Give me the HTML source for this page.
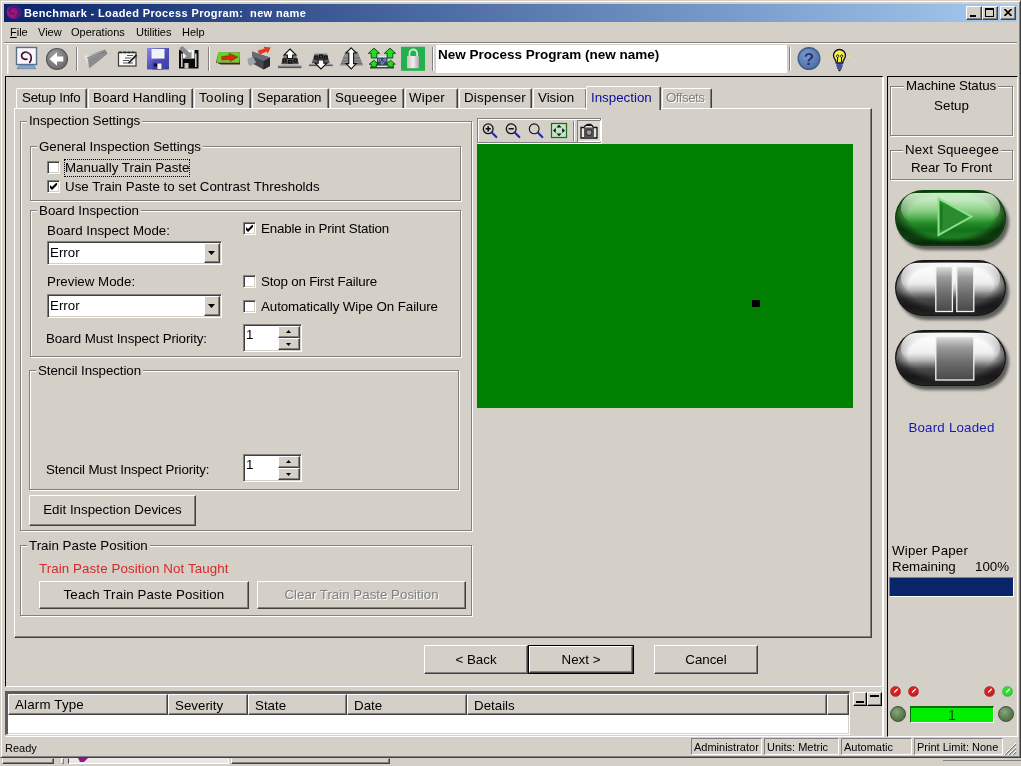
<!DOCTYPE html>
<html lang="en">
<head>
<meta charset="utf-8">
<title>Benchmark - Loaded Process Program: new name</title>
<style>
html,body{margin:0;padding:0;}
body{width:1021px;height:766px;overflow:hidden;background:#d4d0c8;position:relative;font-family:"Liberation Sans",sans-serif;font-size:14px;color:#000;}
#app{position:absolute;left:0;top:0;width:1021px;height:766px;overflow:hidden;background:#d4d0c8;will-change:transform;}
.a{position:absolute;white-space:nowrap;}
.t{position:absolute;white-space:nowrap;line-height:16px;font-size:13.33px;margin-top:1px;}
.th{position:absolute;white-space:nowrap;font-size:11px;line-height:13px;}
.grp{position:absolute;border:1px solid #808080;box-shadow:1px 1px 0 #fff, inset 1px 1px 0 #fff;box-sizing:border-box;}
.lg{position:absolute;white-space:nowrap;line-height:16px;font-size:13.33px;margin-top:1px;background:#d4d0c8;padding:0 2px;}
.btn{position:absolute;box-sizing:border-box;border:1px solid;border-color:#fff #404040 #404040 #fff;box-shadow:inset -1px -1px 0 #808080;text-align:center;font-size:13.33px;background:#d4d0c8;white-space:nowrap;}
.sunk{position:absolute;box-sizing:border-box;border:1px solid;border-color:#808080 #fff #fff #808080;box-shadow:inset 1px 1px 0 #404040, inset -1px -1px 0 #d4d0c8;background:#fff;}
.cb{position:absolute;width:13px;height:13px;box-sizing:border-box;border:1px solid;border-color:#808080 #fff #fff #808080;box-shadow:inset 1px 1px 0 #404040, inset -1px -1px 0 #d4d0c8;background:#fff;}
.cb svg{position:absolute;left:2px;top:2px;}
.sb{position:absolute;box-sizing:border-box;height:17px;border:1px solid;border-color:#808080 #fff #fff #808080;font-size:11px;line-height:16px;padding-left:2px;white-space:nowrap;}
.tab{position:absolute;box-sizing:border-box;border:1px solid;border-color:#fff #404040 transparent #fff;border-bottom:none;box-shadow:inset -1px 0 0 #808080;border-radius:2px 2px 0 0;background:#d4d0c8;}
.pill{position:absolute;left:896px;width:112px;height:56px;border-radius:28px;box-sizing:border-box;border:2px solid #000;box-shadow:1px 2px 2px rgba(0,0,0,0.35);overflow:hidden;}
.hd{position:absolute;top:694px;height:21px;box-sizing:border-box;background:#d4d0c8;border:1px solid;border-color:#fff #404040 #404040 #fff;box-shadow:inset -1px -1px 0 #808080;}
</style>
</head>
<body>
<div id="app">

<!-- window frame -->
<div class="a" style="left:0;top:0;width:1021px;height:758px;box-sizing:border-box;border:1px solid;border-color:#d4d0c8 #404040 #404040 #d4d0c8;box-shadow:inset 1px 1px 0 #fff, inset -1px -1px 0 #808080;"></div>

<!-- title bar -->
<div class="a" id="title" style="left:4px;top:4px;width:1013px;height:18px;background:linear-gradient(90deg,#0a246a 0%,#a6caf0 100%);"></div>
<svg class="a" style="left:5px;top:4px" width="18" height="17" viewBox="0 0 18 17"><defs><radialGradient id="ti" cx="0.35" cy="0.6" r="0.7"><stop offset="0" stop-color="#b01868"/><stop offset="0.6" stop-color="#7c1a8c"/><stop offset="1" stop-color="#5a1a90" stop-opacity="0.2"/></radialGradient></defs>
<ellipse cx="9.2" cy="8" rx="7.8" ry="7" fill="url(#ti)"/><path d="M9.5 9.5 C 7 10.5 4.5 9 4.5 6.6 C 4.5 4 7.5 2.6 10 3.4 C 13 4.4 14 7.5 13.2 10 C 12.8 11.5 12 12.5 10.5 13.5" fill="none" stroke="#4a1068" stroke-width="1.5" opacity="0.8"/></svg>
<span class="th" id="titletext" style="left:24px;top:6px;color:#fff;font-weight:bold;font-size:11px;line-height:14px;letter-spacing:0.36px;">Benchmark - Loaded Process Program:&nbsp; new name</span>

<!-- menu -->
<span class="th" style="left:10px;top:26px;"><u>F</u>ile</span>
<span class="th" style="left:38px;top:26px;">View</span>
<span class="th" style="left:71px;top:26px;">Operations</span>
<span class="th" style="left:136px;top:26px;">Utilities</span>
<span class="th" style="left:182px;top:26px;">Help</span>

<!-- title buttons -->
<div class="btn" style="left:966px;top:6px;width:16px;height:14px;"><div class="a" style="left:3px;top:8px;width:6px;height:2px;background:#000;"></div></div>
<div class="btn" style="left:982px;top:6px;width:16px;height:14px;"><div class="a" style="left:2px;top:1px;width:9px;height:9px;box-sizing:border-box;border:1px solid #000;border-top-width:2px;"></div></div>
<div class="btn" style="left:1000px;top:6px;width:16px;height:14px;"><svg class="a" style="left:3px;top:2px" width="8" height="7" viewBox="0 0 8 7"><path d="M0.5 0 L7.5 7 M7.5 0 L0.5 7" stroke="#000" stroke-width="1.6" fill="none"/></svg></div>

<!-- menu / toolbar separator -->
<div class="a" style="left:4px;top:42px;width:1013px;height:1px;background:#808080;"></div>
<div class="a" style="left:4px;top:43px;width:1013px;height:1px;background:#fff;"></div>
<!-- toolbar gripper -->
<div class="a" style="left:7px;top:45px;width:1px;height:29px;background:#fff;"></div><div class="a" style="left:8px;top:45px;width:1px;height:29px;background:#e6e3dd;"></div>
<!-- toolbar separators -->
<div class="a" style="left:76px;top:47px;width:1px;height:24px;background:#808080;box-shadow:1px 0 0 #fff;"></div>
<div class="a" style="left:208px;top:47px;width:1px;height:24px;background:#808080;box-shadow:1px 0 0 #fff;"></div>
<div class="a" style="left:432px;top:47px;width:1px;height:24px;background:#808080;box-shadow:1px 0 0 #fff;"></div>
<div class="a" style="left:789px;top:47px;width:1px;height:24px;background:#808080;box-shadow:1px 0 0 #fff;"></div>
<!-- program name field -->
<div class="a" style="left:436px;top:45px;width:351px;height:28px;background:#fff;"></div>
<span class="a" style="left:438px;top:47px;font-size:13.5px;line-height:16px;font-weight:bold;">New Process Program (new name)</span>

<!-- TOOLBAR ICONS -->
<svg class="a" style="left:0;top:44px" width="880" height="30" viewBox="0 44 880 30">
<defs>
<linearGradient id="tg1" x1="0" y1="0" x2="0" y2="1"><stop offset="0" stop-color="#8a8a8a"/><stop offset="1" stop-color="#4a4a4a"/></linearGradient>
<linearGradient id="tg2" x1="0" y1="0" x2="0" y2="1"><stop offset="0" stop-color="#d8d8d8"/><stop offset="1" stop-color="#3a3a3a"/></linearGradient>
<linearGradient id="fl1" x1="0" y1="0" x2="1" y2="1"><stop offset="0" stop-color="#8a8af0"/><stop offset="0.5" stop-color="#5050b8"/><stop offset="1" stop-color="#3c3ca0"/></linearGradient>
<linearGradient id="fo1" x1="0" y1="0" x2="1" y2="0"><stop offset="0" stop-color="#f0f0f0"/><stop offset="0.35" stop-color="#b8b8b8"/><stop offset="1" stop-color="#808080"/></linearGradient>
<radialGradient id="bk1" cx="0.4" cy="0.35" r="0.7"><stop offset="0" stop-color="#a0a0a0"/><stop offset="1" stop-color="#666"/></radialGradient>
<radialGradient id="hp1" cx="0.4" cy="0.35" r="0.7"><stop offset="0" stop-color="#7a9ad0"/><stop offset="1" stop-color="#4a6aa8"/></radialGradient>
<linearGradient id="lk1" x1="0" y1="0" x2="1" y2="0"><stop offset="0" stop-color="#c8c0c4"/><stop offset="0.5" stop-color="#f4eef0"/><stop offset="1" stop-color="#b0a8ac"/></linearGradient>
</defs>
<!-- 1 monitor -->
<rect x="16.5" y="47.5" width="20" height="17" fill="#fbf6fa" stroke="#56708e" stroke-width="1.4"/>
<path d="M19 65.5 h15 l2 3.2 h-19 z" fill="#86a6cc" stroke="#5a7aa0" stroke-width="0.6"/>
<path d="M26.9 59.2 C 24.5 60 22 58.5 21.6 56.1 C 21.2 53.5 24 51.8 26.9 52.3 C 30 52.8 31.6 56 31.2 58.6 C 31 60.3 30.5 61.5 29.7 62.3" fill="none" stroke="#3a1030" stroke-width="1.7" stroke-linecap="round"/>
<path d="M24 53.5 q3 -2 6 0.5" fill="none" stroke="#f0c0d8" stroke-width="0.8" opacity="0.6"/>
<!-- 2 back -->
<circle cx="57" cy="59" r="10.5" fill="url(#bk1)" stroke="#585858" stroke-width="1.2"/>
<path d="M49.5 59 L57 52.3 L57 56.6 L63.3 56.6 L63.3 61.4 L57 61.4 L57 65.7 Z" fill="#fff"/>
<!-- 3 folder (disabled) -->
<path d="M84.5 56 L105 49.5 L107.5 53.5 L89 69 Z" fill="url(#fo1)"/>
<path d="M88 58.5 L105.5 52.5 L106.5 54.5 L89 68.5 Z" fill="#8c8c8c"/>
<path d="M87 58 L105.5 51.5" stroke="#7a7a7a" stroke-width="1"/>
<!-- 4 notepad -->
<rect x="118.5" y="52.5" width="17.5" height="13.5" fill="#fafafa" stroke="#3a3a3a" stroke-width="1.2"/>
<path d="M119 52.3 h17" stroke="#2a2a2a" stroke-width="1.8" stroke-dasharray="3 1.2"/>
<path d="M127 55.5 h6 M125 58 h6 M123 60.5 h6 M123 63 h10" stroke="#555" stroke-width="1"/>
<path d="M136.5 55 L128.5 63.2" stroke="#222" stroke-width="1.8"/>
<!-- 5 blue floppy -->
<rect x="147" y="48" width="22" height="21.5" fill="url(#fl1)"/>
<rect x="151.5" y="49" width="13" height="9.6" fill="#f2f4fc"/>
<rect x="152.5" y="62.5" width="10.5" height="7" fill="#4040a0"/>
<rect x="157.5" y="63.5" width="4" height="5.5" fill="#f4f4ff"/>
<rect x="154" y="63.5" width="3" height="3" fill="#101020"/>
<!-- 6 black floppy w/ arrow -->
<rect x="179" y="50" width="19.5" height="18.5" fill="#0a0a0a"/>
<rect x="183" y="50" width="11.5" height="9" fill="#f4f4f4"/>
<rect x="181" y="53.5" width="1.6" height="13.5" fill="#c8c8c8"/><rect x="195" y="53.5" width="1.6" height="13.5" fill="#c8c8c8"/>
<rect x="184.5" y="63" width="4" height="5.5" fill="#c8c8c8"/>
<rect x="183" y="58.5" width="11.5" height="1.6" fill="#0a0a0a"/>
<path d="M180 47.5 L182.5 46 L190 53 L191.5 51 L191.5 58 L184.5 58 L186.5 56 L179.5 49.5 Z" fill="#8a8a8a"/>
<!-- 7 green board -->
<path d="M218.5 52.5 L240 52.5 L240 64.5 L221 64.5 L216 62.5 Z" fill="#3a2a1a"/>
<path d="M218.5 52 L240 52.5 L239.5 62 L216.5 62 Z" fill="#6ad02a"/>
<path d="M221.5 56.6 L229.5 55.6 L229 53.2 L238 57 L230 61.6 L230.3 59.4 L222 60 Z" fill="#d42c0c" stroke="#7a3a10" stroke-width="0.6"/><path d="M217 62.6 L239.5 62.6" stroke="#c8e870" stroke-width="0.8" opacity="0.7"/>
<!-- 8 camera -->
<path d="M252 51.5 L270 57.5 L270 66 L263.5 69.5 L252.5 63.5 Z" fill="#46464e"/>
<path d="M263.5 61 L270 57.5 L270 66 L263.5 69.5 Z" fill="#28282e"/>
<path d="M252 51.5 L263 55.5 L270 57.5 L263.5 61 L252.5 56.5 Z" fill="#6a6a74"/>
<path d="M247.5 58.5 L253 56.5 L256 62.5 L250.5 66 L248 64 Z" fill="#9aa2aa"/>
<path d="M257.5 50.8 L264.5 48.6 L263.8 46.8 L270.8 47.4 L267.6 53.4 L266.6 51.6 L259.8 54.4 Z" fill="#e03c1c"/><path d="M258 50.2 L264 48.4" stroke="#f8a090" stroke-width="0.8"/>
<!-- 9 tooling up -->
<path d="M284 54.5 L296 54.5 L299 64.5 L281 64.5 Z" fill="url(#tg1)"/>
<rect x="278" y="64.5" width="23.5" height="3.6" fill="url(#tg2)"/>
<path d="M290 49 L296 55 L292.6 55 L292.6 58.5 L287.4 58.5 L287.4 55 L284 55 Z" fill="#fff" stroke="#111" stroke-width="1.1" stroke-linejoin="miter"/>
<rect x="283" y="59" width="3" height="3" fill="#4a4a4a" stroke="#0a0a0a" stroke-width="1.2"/><rect x="288.5" y="60.3" width="3.4" height="2.6" fill="#4a4a4a" stroke="#0a0a0a" stroke-width="1.2"/><rect x="294" y="59" width="3" height="3" fill="#4a4a4a" stroke="#0a0a0a" stroke-width="1.2"/>
<!-- 10 tooling down -->
<path d="M314.5 53.5 L327 53.5 L330 64 L311.5 64 Z" fill="url(#tg1)"/>
<rect x="309" y="63.3" width="23.7" height="2.8" fill="url(#tg2)"/>
<path d="M321 69 L315.2 63.2 L318.2 63.2 L318.2 60 L323.8 60 L323.8 63.2 L326.8 63.2 Z" fill="#fff" stroke="#111" stroke-width="1.1"/>
<rect x="314.8" y="56" width="3" height="3" fill="#4a4a4a" stroke="#0a0a0a" stroke-width="1.2"/><rect x="319.5" y="55" width="3.2" height="3" fill="#4a4a4a" stroke="#0a0a0a" stroke-width="1.2"/><rect x="324.2" y="56" width="3" height="3" fill="#4a4a4a" stroke="#0a0a0a" stroke-width="1.2"/>
<!-- 11 double arrow -->
<path d="M345.5 51.5 L357.5 51.5 L363.3 65.5 L339.8 65.5 Z" fill="#8e8e8e"/>
<path d="M343 58 h17 M342 61 h19 M341 63.6 h21" stroke="#6e6e6e" stroke-width="1"/>
<path d="M351.2 47.8 L356.3 53 L353.6 53 L353.6 63.6 L356.3 63.6 L351.2 68.9 L346.1 63.6 L348.8 63.6 L348.8 53 L346.1 53 Z" fill="#fff" stroke="#111" stroke-width="1.1"/>
<!-- 12 green arrows -->
<rect x="377" y="56.5" width="10.5" height="9.5" fill="#34466a"/>
<rect x="377" y="56" width="10.5" height="1.5" fill="#dfe6f0"/>
<circle cx="379.5" cy="60" r="1.2" fill="none" stroke="#9ab0d0" stroke-width="0.8"/><circle cx="384.8" cy="60" r="1.2" fill="none" stroke="#9ab0d0" stroke-width="0.8"/><circle cx="382.2" cy="63" r="1.2" fill="none" stroke="#9ab0d0" stroke-width="0.8"/>
<path d="M370 67.8 h24" stroke="#203020" stroke-width="1.3"/><path d="M372 66.3 h20" stroke="#e8e8f0" stroke-width="1.2"/>
<g fill="#22dc22" stroke="#0c500c" stroke-width="1">
<path d="M374 48.2 L379.6 53.3 L376.8 53.3 L376.8 58 L371.2 58 L371.2 53.3 L368.4 53.3 Z"/>
<path d="M390 48.2 L395.6 53.3 L392.8 53.3 L392.8 58 L387.2 58 L387.2 53.3 L384.4 53.3 Z"/>
<path d="M373.8 60.3 L378.4 64.2 L376.4 64.2 L376.4 67 L371.2 67 L371.2 64.2 L369.2 64.2 Z"/>
<path d="M390.6 60.3 L395.2 64.2 L393.2 64.2 L393.2 67 L388 67 L388 64.2 L386 64.2 Z"/>
</g>
<!-- 13 lock -->
<rect x="401" y="46.8" width="24" height="24" fill="#22b14c"/>
<path d="M409.5 56.5 v-3.2 a3.8 3.8 0 0 1 7.6 0 v3.2" fill="none" stroke="#c8ecd0" stroke-width="1.8"/>
<rect x="407" y="56" width="12" height="12.3" rx="1" fill="url(#lk1)"/>
<!-- help -->
<circle cx="809" cy="58.5" r="10.8" fill="url(#hp1)" stroke="#3f5c8c" stroke-width="1.4"/>
<text x="809" y="65" text-anchor="middle" font-family="Liberation Sans, sans-serif" font-weight="bold" font-size="17" fill="#243a66">?</text>
<!-- bulb -->
<path d="M839.5 49.5 a6 6 0 0 1 6 6 c0 3 -2.6 4.2 -2.8 7.5 h-6.4 c-0.2 -3.3 -2.8 -4.5 -2.8 -7.5 a6 6 0 0 1 6 -6 z" fill="#f4f43a" stroke="#101030" stroke-width="1.3"/>
<path d="M837.5 57 v5 M841.5 57 v5 M837.2 57.2 a1.2 1.2 0 1 1 1 0 M841.2 57.2 a1.2 1.2 0 1 1 1 0" stroke="#101030" stroke-width="1" fill="none"/>
<path d="M836.4 64 h6.2 M836.4 66 h6.2 M837 68 h5" stroke="#1a2a8a" stroke-width="1.5"/>
<path d="M838 69.8 h3 l-1.5 1.2 z" fill="#111" stroke="#111" stroke-width="0.6"/>
<path d="M831.5 52 l-2 -1.2 M830.8 56.5 h-2.2 M847.5 52 l2 -1.2 M848.2 56.5 h2.2" stroke="#f0e860" stroke-width="1"/>
</svg>


<!-- main panel frame -->
<div class="a" id="mainpanel" style="left:5px;top:76px;width:879px;height:611px;box-sizing:border-box;border:1px solid;border-color:#000 #fff #fff #000;border-right-width:2px;"></div>
<div class="a" style="left:5px;top:687px;width:879px;height:50px;box-sizing:border-box;border:1px solid;border-color:transparent #fff #fff transparent;border-right-width:2px;"></div>

<!-- right panel frame -->
<div class="a" id="rightpanel" style="left:887px;top:76px;width:131px;height:661px;box-sizing:border-box;border:1px solid;border-color:#000 #fff #fff #000;"></div>

<!-- tab control -->
<div class="a" id="tabpanel" style="left:14px;top:108px;width:858px;height:530px;box-sizing:border-box;border:1px solid;border-color:#fff #404040 #404040 #fff;box-shadow:inset -1px -1px 0 #808080;"></div>
<div class="tab" style="left:16px;top:88px;width:71px;height:20px;"></div><span class="t" style="left:22px;top:89px;letter-spacing:-0.23px;">Setup Info</span>
<div class="tab" style="left:88px;top:88px;width:105px;height:20px;"></div><span class="t" style="left:93px;top:89px;letter-spacing:0.1px;">Board Handling</span>
<div class="tab" style="left:194px;top:88px;width:57px;height:20px;"></div><span class="t" style="left:199px;top:89px;letter-spacing:0.43px;">Tooling</span>
<div class="tab" style="left:252px;top:88px;width:77px;height:20px;"></div><span class="t" style="left:257px;top:89px;">Separation</span>
<div class="tab" style="left:330px;top:88px;width:74px;height:20px;"></div><span class="t" style="left:335px;top:89px;letter-spacing:0.15px;">Squeegee</span>
<div class="tab" style="left:405px;top:88px;width:53px;height:20px;"></div><span class="t" style="left:409px;top:89px;letter-spacing:0.24px;">Wiper</span>
<div class="tab" style="left:459px;top:88px;width:73px;height:20px;"></div><span class="t" style="left:464px;top:89px;letter-spacing:0.22px;">Dispenser</span>
<div class="tab" style="left:533px;top:88px;width:54px;height:20px;"></div><span class="t" style="left:538px;top:89px;">Vision</span>
<div class="tab" style="left:662px;top:88px;width:50px;height:20px;"></div><span class="t" style="left:666px;top:89px;color:#808080;text-shadow:1px 1px 0 #fff;letter-spacing:-0.5px;">Offsets</span>
<div class="tab" style="left:586px;top:86px;width:75px;height:24px;background:#d4d0c8;"></div><span class="t" style="left:591px;top:89px;color:#0a0aa0;">Inspection</span>

<!-- left content -->
<div class="grp" style="left:20px;top:121px;width:452px;height:410px;"></div><span class="lg" style="left:27px;top:112px;letter-spacing:-0.08px;">Inspection Settings</span>
<div class="grp" style="left:30px;top:146px;width:431px;height:55px;"></div><span class="lg" style="left:37px;top:138px;letter-spacing:-0.07px;">General Inspection Settings</span>
<div class="cb" style="left:47px;top:161px;"></div>
<span class="t" style="left:65px;top:159px;outline:1px dotted #000;outline-offset:0px;">Manually Train Paste</span>
<div class="cb" style="left:47px;top:180px;"><svg width="7" height="7" viewBox="0 0 7 7"><path d="M0 2v3l2 2 5-5V-1L2 4z" fill="#000"/></svg></div>
<span class="t" style="left:65px;top:178px;">Use Train Paste to set Contrast Thresholds</span>
<div class="grp" style="left:30px;top:210px;width:431px;height:147px;"></div><span class="lg" style="left:37px;top:202px;">Board Inspection</span>
<span class="t" style="left:47px;top:222px;">Board Inspect Mode:</span>
<div class="sunk" style="left:47px;top:241px;width:175px;height:24px;"></div><span class="t" style="left:50px;top:244px;">Error</span><div class="btn" style="left:204px;top:243px;width:16px;height:20px;"><svg class="a" style="left:3px;top:7px" width="7" height="4" viewBox="0 0 7 4"><path d="M0 0h7L3.5 4z" fill="#000"/></svg></div>
<span class="t" style="left:47px;top:273px;">Preview Mode:</span>
<div class="sunk" style="left:47px;top:294px;width:175px;height:24px;"></div><span class="t" style="left:50px;top:297px;">Error</span><div class="btn" style="left:204px;top:296px;width:16px;height:20px;"><svg class="a" style="left:3px;top:7px" width="7" height="4" viewBox="0 0 7 4"><path d="M0 0h7L3.5 4z" fill="#000"/></svg></div>
<span class="t" style="left:46px;top:330px;letter-spacing:-0.1px;">Board Must Inspect Priority:</span>
<div class="sunk" style="left:243px;top:324px;width:59px;height:28px;"></div><span class="t" style="left:246px;top:326px;">1</span><div class="btn" style="left:278px;top:326px;width:22px;height:12px;"><svg class="a" style="left:7px;top:3px" width="5" height="3" viewBox="0 0 5 3"><path d="M0 3h5L2.5 0z" fill="#000"/></svg></div><div class="btn" style="left:278px;top:338px;width:22px;height:12px;"><svg class="a" style="left:7px;top:4px" width="5" height="3" viewBox="0 0 5 3"><path d="M0 0h5L2.5 3z" fill="#000"/></svg></div>
<div class="cb" style="left:243px;top:222px;"><svg width="7" height="7" viewBox="0 0 7 7"><path d="M0 2v3l2 2 5-5V-1L2 4z" fill="#000"/></svg></div>
<span class="t" style="left:261px;top:220px;letter-spacing:-0.17px;">Enable in Print Station</span>
<div class="cb" style="left:243px;top:275px;"></div>
<span class="t" style="left:261px;top:273px;letter-spacing:-0.19px;">Stop on First Failure</span>
<div class="cb" style="left:243px;top:300px;"></div>
<span class="t" style="left:261px;top:298px;letter-spacing:-0.08px;">Automatically Wipe On Failure</span>
<div class="grp" style="left:29px;top:370px;width:430px;height:120px;"></div><span class="lg" style="left:36px;top:362px;letter-spacing:-0.08px;">Stencil Inspection</span>
<span class="t" style="left:46px;top:461px;letter-spacing:-0.16px;">Stencil Must Inspect Priority:</span>
<div class="sunk" style="left:243px;top:454px;width:59px;height:28px;"></div><span class="t" style="left:246px;top:456px;">1</span><div class="btn" style="left:278px;top:456px;width:22px;height:12px;"><svg class="a" style="left:7px;top:3px" width="5" height="3" viewBox="0 0 5 3"><path d="M0 3h5L2.5 0z" fill="#000"/></svg></div><div class="btn" style="left:278px;top:468px;width:22px;height:12px;"><svg class="a" style="left:7px;top:4px" width="5" height="3" viewBox="0 0 5 3"><path d="M0 0h5L2.5 3z" fill="#000"/></svg></div>
<div class="btn" style="left:29px;top:495px;width:167px;height:31px;line-height:28px;">Edit Inspection Devices</div>
<div class="grp" style="left:20px;top:545px;width:452px;height:71px;"></div><span class="lg" style="left:27px;top:537px;">Train Paste Position</span>
<span class="t" style="left:39px;top:560px;color:#d82828;letter-spacing:0.09px;">Train Paste Position Not Taught</span>
<div class="btn" style="left:39px;top:581px;width:210px;height:28px;line-height:25px;letter-spacing:0.115px;">Teach Train Paste Position</div>
<div class="btn" style="left:257px;top:581px;width:209px;height:28px;line-height:25px;color:#808080;text-shadow:1px 1px 0 #fff;">Clear Train Paste Position</div>

<!-- image viewer -->
<div class="a" style="left:477px;top:118px;width:124px;height:25px;box-sizing:border-box;border:1px solid #808080;box-shadow:1px 1px 0 #fff, inset 1px 1px 0 #fff;"></div>
<svg class="a" style="left:477px;top:119px" width="126" height="25" viewBox="477 119 126 25">
<g fill="none" stroke="#111" stroke-width="1.3">
<circle cx="488.2" cy="128.8" r="4.9"/><circle cx="511.2" cy="128.8" r="4.9"/><circle cx="534.2" cy="128.8" r="4.9" stroke-width="1.1"/>
</g>
<path d="M485.6 128.8 h5.2 M488.2 126.2 v5.2 M508.6 128.8 h5.2" stroke="#111" stroke-width="1.6"/>
<g stroke="#2828b0" stroke-width="2.2" stroke-linecap="round"><path d="M492.3 133 L496.3 137"/><path d="M515.3 133 L519.3 137"/><path d="M538.3 133 L542.3 137"/></g>
<rect x="551.5" y="123.5" width="15" height="14" fill="#c4e4c4" stroke="#1a6a1a" stroke-width="1.2"/>
<path d="M559 124.8 l2.6 2.8 h-5.2 z M559 136.2 l2.6 -2.8 h-5.2 z M553 130.5 l2.8 -2.6 v5.2 z M565 130.5 l-2.8 -2.6 v5.2 z" fill="#111"/>
<path d="M573.5 121 v20" stroke="#808080" stroke-width="1"/><path d="M574.5 121 v20" stroke="#fff" stroke-width="1"/>
<rect x="577.5" y="120.5" width="23" height="21" fill="#dcd9d2" stroke="#808080" stroke-width="1"/>
<path d="M578 141.5 h22.5 v-21" fill="none" stroke="#fff" stroke-width="1"/>
<path d="M581 127.5 h3 l1.5 -2.2 h6.5 l1.5 2.2 h3.5 v10.5 h-16 z" fill="#e8e8e8" stroke="#111" stroke-width="1.3"/>
<rect x="584" y="127.5" width="10" height="10" fill="#555"/>
<circle cx="589" cy="132.5" r="3" fill="#999" stroke="#222" stroke-width="1"/>
<rect x="586.5" y="123.8" width="5" height="2" fill="#111"/>
</svg>

<div class="a" style="left:477px;top:144px;width:376px;height:264px;background:#008000;"></div>
<div class="a" style="left:752px;top:300px;width:8px;height:7px;background:#000;"></div>

<!-- nav buttons -->
<div class="btn" style="left:424px;top:645px;width:104px;height:29px;line-height:28px;">&lt; Back</div>
<div class="a" style="left:528px;top:645px;width:106px;height:29px;box-sizing:border-box;border:1px solid #000;"></div><div class="btn" style="left:529px;top:646px;width:104px;height:27px;line-height:26px;">Next &gt;</div>
<div class="btn" style="left:654px;top:645px;width:104px;height:29px;line-height:28px;">Cancel</div>

<!-- right panel content -->
<div class="grp" style="left:890px;top:86px;width:123px;height:50px;"></div><span class="lg" style="left:904px;top:77px;letter-spacing:-0.13px;">Machine Status</span>
<span class="t" style="left:890px;top:97px;width:123px;text-align:center;">Setup</span>
<div class="grp" style="left:890px;top:150px;width:123px;height:30px;"></div><span class="lg" style="left:903px;top:141px;letter-spacing:0.16px;">Next Squeegee</span>
<span class="t" style="left:890px;top:159px;width:123px;text-align:center;">Rear To Front</span>
<svg class="a" style="left:892px;top:187px" width="122" height="66" viewBox="0 0 122 66">
<defs><linearGradient id="gp" x1="0" y1="0" x2="0" y2="1"><stop offset="0" stop-color="#1f7d20"/><stop offset="0.12" stop-color="#84d080"/><stop offset="0.36" stop-color="#58b656"/><stop offset="0.54" stop-color="#2c972e"/><stop offset="0.72" stop-color="#14711a"/><stop offset="0.88" stop-color="#1f8524"/><stop offset="1" stop-color="#0a520e"/></linearGradient>
<linearGradient id="hp" x1="0" y1="0" x2="0" y2="1"><stop offset="0" stop-color="#d8f4d4" stop-opacity="0.95"/><stop offset="1" stop-color="#d8f4d4" stop-opacity="0"/></linearGradient>
<radialGradient id="ep" cx="0.5" cy="0.45" r="0.5" gradientTransform="translate(0.5 0.45) scale(1 1.05) translate(-0.5 -0.45)"><stop offset="0.78" stop-color="#000" stop-opacity="0"/><stop offset="1" stop-color="#000" stop-opacity="0.55"/></radialGradient>
<filter id="bp" x="-10%" y="-10%" width="130%" height="140%"><feGaussianBlur stdDeviation="1.6"/></filter></defs>
<rect x="6" y="7" width="111" height="56" rx="28" fill="#000" opacity="0.55" filter="url(#bp)"/>
<rect x="3" y="3" width="111" height="56" rx="28" fill="#063f08"/>
<rect x="4.5" y="5" width="108" height="52.5" rx="26.2" fill="url(#gp)"/>
<rect x="4.5" y="5" width="108" height="52.5" rx="26.2" fill="url(#ep)"/>
<rect x="9" y="6" width="99" height="30" rx="15" fill="url(#hp)"/>
<path d="M46.5 11.5 L46.5 48 L79.5 29.5 Z" fill="#2a8c2e" stroke="#8ee08c" stroke-width="2" stroke-linejoin="miter"/><path d="M49.3 17 L49.3 42.5" stroke="#16781b" stroke-width="2.2"/>
</svg>
<svg class="a" style="left:892px;top:257px" width="122" height="66" viewBox="0 0 122 66">
<defs><linearGradient id="gq" x1="0" y1="0" x2="0" y2="1"><stop offset="0" stop-color="#8c8c8c"/><stop offset="0.12" stop-color="#f2f2f2"/><stop offset="0.4" stop-color="#e6e6e6"/><stop offset="0.55" stop-color="#a8a8a8"/><stop offset="0.7" stop-color="#4c4c4c"/><stop offset="0.85" stop-color="#343434"/><stop offset="1" stop-color="#4a4a4a"/></linearGradient>
<linearGradient id="hq" x1="0" y1="0" x2="0" y2="1"><stop offset="0" stop-color="#ffffff" stop-opacity="0.95"/><stop offset="1" stop-color="#ffffff" stop-opacity="0"/></linearGradient>
<radialGradient id="eq" cx="0.5" cy="0.45" r="0.5" gradientTransform="translate(0.5 0.45) scale(1 1.05) translate(-0.5 -0.45)"><stop offset="0.78" stop-color="#000" stop-opacity="0"/><stop offset="1" stop-color="#000" stop-opacity="0.55"/></radialGradient>
<filter id="bq" x="-10%" y="-10%" width="130%" height="140%"><feGaussianBlur stdDeviation="1.6"/></filter></defs>
<rect x="6" y="7" width="111" height="56" rx="28" fill="#000" opacity="0.55" filter="url(#bq)"/>
<rect x="3" y="3" width="111" height="56" rx="28" fill="#161616"/>
<rect x="4.5" y="5" width="108" height="52.5" rx="26.2" fill="url(#gq)"/>
<rect x="4.5" y="5" width="108" height="52.5" rx="26.2" fill="url(#eq)"/>
<rect x="9" y="6" width="99" height="30" rx="15" fill="url(#hq)"/>
<defs><linearGradient id="barg" x1="0" y1="0" x2="0" y2="1"><stop offset="0" stop-color="#e0e0e0"/><stop offset="0.25" stop-color="#9a9a9a"/><stop offset="0.6" stop-color="#6c6c6c"/><stop offset="1" stop-color="#484848"/></linearGradient></defs><rect x="43.8" y="9.5" width="16.6" height="45" fill="url(#barg)" stroke="#f4f4f4" stroke-width="1.3"/><rect x="64.8" y="9.5" width="17" height="45" fill="url(#barg)" stroke="#f4f4f4" stroke-width="1.3"/>
</svg>
<svg class="a" style="left:892px;top:327px" width="122" height="66" viewBox="0 0 122 66">
<defs><linearGradient id="gr" x1="0" y1="0" x2="0" y2="1"><stop offset="0" stop-color="#8c8c8c"/><stop offset="0.12" stop-color="#f2f2f2"/><stop offset="0.4" stop-color="#e6e6e6"/><stop offset="0.55" stop-color="#a8a8a8"/><stop offset="0.7" stop-color="#4c4c4c"/><stop offset="0.85" stop-color="#343434"/><stop offset="1" stop-color="#4a4a4a"/></linearGradient>
<linearGradient id="hr" x1="0" y1="0" x2="0" y2="1"><stop offset="0" stop-color="#ffffff" stop-opacity="0.95"/><stop offset="1" stop-color="#ffffff" stop-opacity="0"/></linearGradient>
<radialGradient id="er" cx="0.5" cy="0.45" r="0.5" gradientTransform="translate(0.5 0.45) scale(1 1.05) translate(-0.5 -0.45)"><stop offset="0.78" stop-color="#000" stop-opacity="0"/><stop offset="1" stop-color="#000" stop-opacity="0.55"/></radialGradient>
<filter id="br" x="-10%" y="-10%" width="130%" height="140%"><feGaussianBlur stdDeviation="1.6"/></filter></defs>
<rect x="6" y="7" width="111" height="56" rx="28" fill="#000" opacity="0.55" filter="url(#br)"/>
<rect x="3" y="3" width="111" height="56" rx="28" fill="#161616"/>
<rect x="4.5" y="5" width="108" height="52.5" rx="26.2" fill="url(#gr)"/>
<rect x="4.5" y="5" width="108" height="52.5" rx="26.2" fill="url(#er)"/>
<rect x="9" y="6" width="99" height="30" rx="15" fill="url(#hr)"/>
<rect x="43.8" y="9.5" width="38" height="43.5" fill="url(#barg)" stroke="#f4f4f4" stroke-width="1.3"/>
</svg>
<span class="t" style="left:890px;top:419px;width:123px;text-align:center;color:#1818b0;letter-spacing:0.2px;">Board Loaded</span>
<span class="t" style="left:892px;top:542px;letter-spacing:0.18px;">Wiper Paper</span>
<span class="t" style="left:892px;top:558px;">Remaining</span><span class="t" style="left:975px;top:558px;">100%</span>
<div class="a" style="left:889px;top:577px;width:125px;height:20px;box-sizing:border-box;border:1px solid;border-color:#808080 #fff #fff #808080;background:#0a246a;"></div>
<div class="a" style="left:890px;top:686px;width:11px;height:11px;border-radius:50%;box-sizing:border-box;border:1px solid #b04040;background:radial-gradient(circle at 45% 40%,#dc2020 0%,#dc2020 45%,#a01010 100%);"><svg class="a" style="left:1px;top:1px" width="8" height="7" viewBox="0 0 8 7"><path d="M5.4 1.2 L2.6 4" stroke="#fff" stroke-width="1.3" stroke-linecap="round"/></svg></div>
<div class="a" style="left:908px;top:686px;width:11px;height:11px;border-radius:50%;box-sizing:border-box;border:1px solid #b04040;background:radial-gradient(circle at 45% 40%,#dc2020 0%,#dc2020 45%,#a01010 100%);"><svg class="a" style="left:1px;top:1px" width="8" height="7" viewBox="0 0 8 7"><path d="M5.4 1.2 L2.6 4" stroke="#fff" stroke-width="1.3" stroke-linecap="round"/></svg></div>
<div class="a" style="left:984px;top:686px;width:11px;height:11px;border-radius:50%;box-sizing:border-box;border:1px solid #b04040;background:radial-gradient(circle at 45% 40%,#dc2020 0%,#dc2020 45%,#a01010 100%);"><svg class="a" style="left:1px;top:1px" width="8" height="7" viewBox="0 0 8 7"><path d="M5.4 1.2 L2.6 4" stroke="#fff" stroke-width="1.3" stroke-linecap="round"/></svg></div>
<div class="a" style="left:1002px;top:686px;width:11px;height:11px;border-radius:50%;box-sizing:border-box;border:1px solid #50c050;background:radial-gradient(circle at 45% 40%,#30e030 0%,#30e030 45%,#18b018 100%);"><svg class="a" style="left:1px;top:1px" width="8" height="7" viewBox="0 0 8 7"><path d="M5.4 1.2 L2.6 4" stroke="#fff" stroke-width="1.3" stroke-linecap="round"/></svg></div>
<div class="a" style="left:890px;top:706px;width:16px;height:16px;border-radius:50%;box-sizing:border-box;border:1px solid #3c5034;background:radial-gradient(circle at 40% 35%,#86a878 0%,#5c7c50 55%,#466040 100%);"></div>
<div class="a" style="left:998px;top:706px;width:16px;height:16px;border-radius:50%;box-sizing:border-box;border:1px solid #3c5034;background:radial-gradient(circle at 40% 35%,#86a878 0%,#5c7c50 55%,#466040 100%);"></div>
<div class="a" style="left:910px;top:706px;width:84px;height:17px;box-sizing:border-box;border:1px solid;border-color:#0a6a0a #fff #fff #0a6a0a;border-top-width:2px;background:#00ee00;text-align:center;font-size:14px;line-height:15px;color:#0b4b0b;">1</div>
<!-- alarm list -->
<div class="a" style="left:5px;top:691px;width:845px;height:44px;box-sizing:border-box;border:3px solid #5c5c5c;border-right:1px solid #fff;border-bottom:1px solid #fff;background:#fff;box-shadow:inset -1px -1px 0 #d4d0c8;"></div>
<div class="hd" style="left:8px;width:160px;"></div><span class="t" style="left:15px;top:696px;letter-spacing:0.18px;">Alarm Type</span>
<div class="hd" style="left:168px;width:80px;"></div><span class="t" style="left:175px;top:697px;">Severity</span>
<div class="hd" style="left:248px;width:99px;"></div><span class="t" style="left:255px;top:697px;">State</span>
<div class="hd" style="left:347px;width:120px;"></div><span class="t" style="left:354px;top:697px;">Date</span>
<div class="hd" style="left:467px;width:360px;"></div><span class="t" style="left:474px;top:697px;">Details</span>
<div class="hd" style="left:827px;width:22px;"></div>
<div class="a" style="left:853px;top:692px;width:14px;height:14px;box-sizing:border-box;border:1px solid;border-color:#fff #000 #000 #fff;box-shadow:inset -1px -1px 0 #808080;"><div class="a" style="left:2px;top:8px;width:8px;height:2px;background:#000;"></div></div>
<div class="a" style="left:867px;top:692px;width:15px;height:14px;box-sizing:border-box;border:1px solid;border-color:#fff #000 #000 #fff;box-shadow:inset -1px -1px 0 #808080;"><div class="a" style="left:2px;top:2px;width:9px;height:2px;background:#000;"></div></div>
<!-- status bar -->
<span class="th" style="left:5px;top:742px;">Ready</span>
<div class="sb" style="left:691px;top:738px;width:71px;">Administrator</div>
<div class="sb" style="left:764px;top:738px;width:75px;">Units: Metric</div>
<div class="sb" style="left:841px;top:738px;width:71px;">Automatic</div>
<div class="sb" style="left:914px;top:738px;width:89px;">Print Limit: None</div>
<svg class="a" style="left:1004px;top:743px" width="13" height="13" viewBox="0 0 13 13"><path d="M12 1L1 12M12 5L5 12M12 9L9 12" stroke="#808080" stroke-width="1.5"/><path d="M12 0L0 12M12 4L4 12M12 8L8 12" stroke="#fff" stroke-width="1"/></svg>
<div class="a" style="left:0;top:758px;width:1021px;height:8px;background:#d4d0c8;"></div>
<div class="a" style="left:2px;top:758px;width:52px;height:6px;box-sizing:border-box;border:1px solid;border-color:transparent #404040 #404040 #fff;box-shadow:inset -1px -1px 0 #808080;"></div>
<div class="a" style="left:61px;top:758px;width:3px;height:6px;box-sizing:border-box;border:1px solid;border-color:#fff #808080 #808080 #fff;"></div>
<div class="a" style="left:68px;top:758px;width:161px;height:6px;box-sizing:border-box;border:1px solid;border-color:transparent #fff #fff #404040;background:#eae8e3;"></div>
<svg class="a" style="left:76px;top:758px" width="14" height="5" viewBox="0 0 14 5"><path d="M2 0 L12 0 L8 4 L4 4 Z" fill="#8a1a8a"/></svg>
<div class="a" style="left:231px;top:758px;width:159px;height:6px;box-sizing:border-box;border:1px solid;border-color:transparent #404040 #404040 #fff;box-shadow:inset -1px -1px 0 #808080;"></div>
<div class="a" style="left:943px;top:760px;width:78px;height:1px;background:#808080;"></div>


</div>
</body>
</html>
